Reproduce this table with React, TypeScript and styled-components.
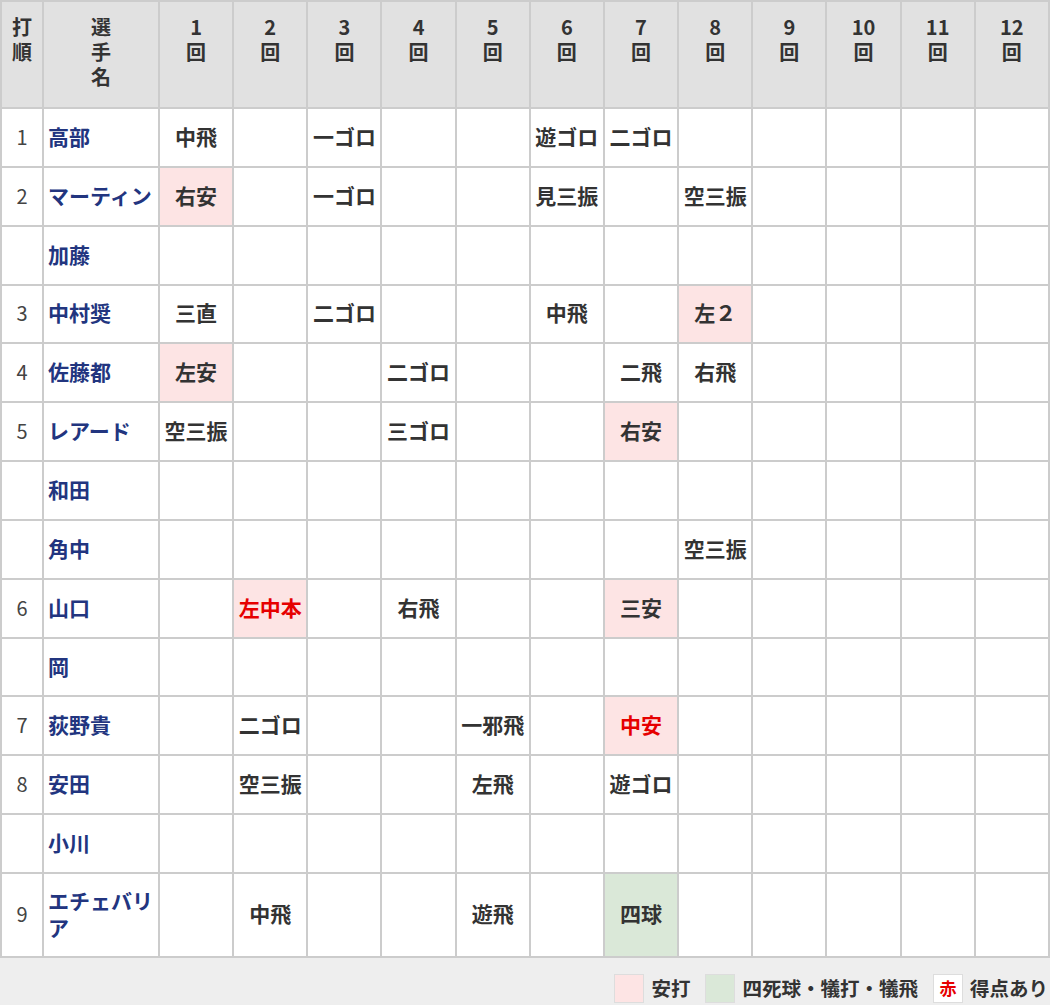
import React from "react";
import styled, { createGlobalStyle } from "styled-components";

const Global = createGlobalStyle`
  html, body { margin: 0; padding: 0; background: #fff; }
  body { font-family: "Noto Sans CJK JP", "Noto Sans", sans-serif; color: #333; }
`;

type Kind = "hit" | "walk" | undefined;
interface Res { t: string; k?: Kind; red?: boolean }
interface Row { order?: string; name: string; res: Record<number, Res> }

const rows: Row[] = [
  { order: "1", name: "高部", res: { 1: { t: "中飛" }, 3: { t: "一ゴロ" }, 6: { t: "遊ゴロ" }, 7: { t: "二ゴロ" } } },
  { order: "2", name: "マーティン", res: { 1: { t: "右安", k: "hit" }, 3: { t: "一ゴロ" }, 6: { t: "見三振" }, 8: { t: "空三振" } } },
  { name: "加藤", res: {} },
  { order: "3", name: "中村奨", res: { 1: { t: "三直" }, 3: { t: "二ゴロ" }, 6: { t: "中飛" }, 8: { t: "左２", k: "hit" } } },
  { order: "4", name: "佐藤都", res: { 1: { t: "左安", k: "hit" }, 4: { t: "二ゴロ" }, 7: { t: "二飛" }, 8: { t: "右飛" } } },
  { order: "5", name: "レアード", res: { 1: { t: "空三振" }, 4: { t: "三ゴロ" }, 7: { t: "右安", k: "hit" } } },
  { name: "和田", res: {} },
  { name: "角中", res: { 8: { t: "空三振" } } },
  { order: "6", name: "山口", res: { 2: { t: "左中本", k: "hit", red: true }, 4: { t: "右飛" }, 7: { t: "三安", k: "hit" } } },
  { name: "岡", res: {} },
  { order: "7", name: "荻野貴", res: { 2: { t: "二ゴロ" }, 5: { t: "一邪飛" }, 7: { t: "中安", k: "hit", red: true } } },
  { order: "8", name: "安田", res: { 2: { t: "空三振" }, 5: { t: "左飛" }, 7: { t: "遊ゴロ" } } },
  { name: "小川", res: {} },
  { order: "9", name: "エチェバリア", res: { 2: { t: "中飛" }, 5: { t: "遊飛" }, 7: { t: "四球", k: "walk" } } },
];

const innings = Array.from({ length: 12 }, (_, i) => i + 1);

const Page = styled.div`
  width: 1050px;
`;

const Table = styled.table`
  width: 1050px;
  border-collapse: collapse;
  table-layout: fixed;
  border: 2px solid #cccccc;
`;

const HeadCell = styled.th`
  background: #e1e1e1;
  border: 2px solid #cccccc;
  height: 93px;
  padding: 12px 0 0;
  vertical-align: top;
  font-size: 20px;
  line-height: 25px;
  font-weight: 700;
  color: #333;
  text-align: center;
`;

const HeadLine = styled.span`
  display: block;
  height: 25px;
`;

const Cell = styled.td<{ $kind?: Kind }>`
  border: 2px solid #cccccc;
  height: 28.85px;
  padding: 13px 0 15px;
  vertical-align: middle;
  text-align: center;
  font-size: 21px;
  line-height: 27px;
  background: ${(p) => (p.$kind === "hit" ? "#fde4e4" : p.$kind === "walk" ? "#dae8d8" : "#fff")};
`;

const OrderCell = styled(Cell)`
  font-weight: 400;
  font-size: 20px;
  color: #444;
`;

const NameCell = styled(Cell)`
  text-align: left;
  padding: 13px 3px 15px 4px;
  font-weight: 700;
  color: #22357f;
`;

const ResultText = styled.span<{ $red?: boolean }>`
  font-weight: 700;
  color: ${(p) => (p.$red ? "#e60000" : "#333")};
  white-space: nowrap;
`;

const Legend = styled.div`
  background: #eeeeee;
  display: flex;
  justify-content: flex-end;
  align-items: center;
  padding: 16px 2px 14px 0;
  font-size: 19.5px;
  line-height: 28px;
  font-weight: 700;
  color: #333;
`;

const Swatch = styled.span<{ $bg: string }>`
  box-sizing: border-box;
  display: inline-flex;
  align-items: center;
  justify-content: center;
  width: 30px;
  height: 29px;
  border: 1px solid #dddddd;
  background: ${(p) => p.$bg};
  margin-right: 7px;
  font-size: 17px;
  color: #e60000;
`;

const LegendLabel = styled.span`
  margin-right: 15px;
  &:last-child { margin-right: 0; }
`;

export default function App() {
  return (
    <Page>
      <Global />
      <Table>
        <colgroup>
          <col style={{ width: 42 }} />
          <col style={{ width: 116 }} />
          {innings.map((i) => (
            <col key={i} />
          ))}
        </colgroup>
        <thead>
          <tr>
            <HeadCell>
              <HeadLine>打</HeadLine>
              <HeadLine>順</HeadLine>
            </HeadCell>
            <HeadCell>
              <HeadLine>選</HeadLine>
              <HeadLine>手</HeadLine>
              <HeadLine>名</HeadLine>
            </HeadCell>
            {innings.map((i) => (
              <HeadCell key={i}>
                <HeadLine>{i}</HeadLine>
                <HeadLine>回</HeadLine>
              </HeadCell>
            ))}
          </tr>
        </thead>
        <tbody>
          {rows.map((r, idx) => (
            <tr key={idx}>
              <OrderCell>{r.order ?? ""}</OrderCell>
              <NameCell>{r.name}</NameCell>
              {innings.map((i) => {
                const res = r.res[i];
                return (
                  <Cell key={i} $kind={res?.k}>
                    {res ? <ResultText $red={res.red}>{res.t}</ResultText> : null}
                  </Cell>
                );
              })}
            </tr>
          ))}
        </tbody>
      </Table>
      <Legend>
        <Swatch $bg="#fde4e4" />
        <LegendLabel>安打</LegendLabel>
        <Swatch $bg="#dae8d8" />
        <LegendLabel>四死球・犠打・犠飛</LegendLabel>
        <Swatch $bg="#ffffff">赤</Swatch>
        <LegendLabel>得点あり</LegendLabel>
      </Legend>
    </Page>
  );
}
